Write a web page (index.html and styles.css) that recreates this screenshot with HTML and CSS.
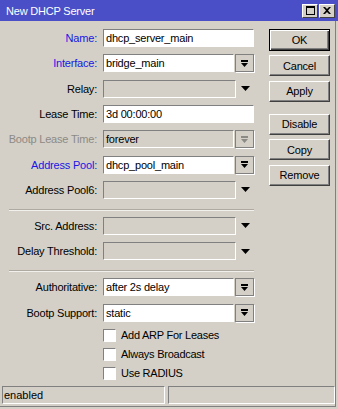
FILE: index.html
```html
<!DOCTYPE html>
<html lang="en">
<head>
    <meta charset="UTF-8">
    <meta name="viewport" content="width=device-width, initial-scale=1.0">
    <title>New DHCP Server</title>
    <link rel="stylesheet" href="styles.css">
</head>
<body>

<div class="window">
    <div class="titlebar">
        <span class="title">New DHCP Server</span>
        <div class="title-buttons">
            <span class="tbtn">
                <svg width="9" height="9" viewBox="0 0 9 9"><path d="M0 0H9V9H0Z M1 2V8H8V2Z" fill="#000" fill-rule="evenodd"/></svg>
            </span>
            <span class="tbtn">
                <svg width="8" height="7" viewBox="0 0 8 7"><path d="M0 0H2L4 2L6 0H8L5 3.5L8 7H6L4 5L2 7H0L3 3.5Z" fill="#000"/></svg>
            </span>
        </div>
    </div>

    <div class="main">
        <div class="content">
            <div class="form">
                <div class="row">
                    <label class="lbl blue">Name:</label>
                    <div class="field"><div class="box">dhcp_server_main</div></div>
                </div>
                <div class="row">
                    <label class="lbl blue">Interface:</label>
                    <div class="field">
                        <div class="box">bridge_main</div>
                        <span class="dd"><svg width="7" height="7" viewBox="0 0 7 7"><rect x="0" y="0" width="7" height="2" fill="#000"/><path d="M0 3H7L3.5 7Z" fill="#000"/></svg></span>
                    </div>
                </div>
                <div class="row">
                    <label class="lbl">Relay:</label>
                    <div class="field plain">
                        <div class="box empty"></div>
                        <span class="arrow"><svg width="9" height="5" viewBox="0 0 9 5"><path d="M0 0H9L4.5 5Z" fill="#000"/></svg></span>
                    </div>
                </div>
                <div class="row">
                    <label class="lbl">Lease Time:</label>
                    <div class="field"><div class="box">3d 00:00:00</div></div>
                </div>
                <div class="row">
                    <label class="lbl disabled">Bootp Lease Time:</label>
                    <div class="field">
                        <div class="box empty">forever</div>
                        <span class="dd"><svg width="7" height="7" viewBox="0 0 7 7"><rect x="0" y="0" width="7" height="2" fill="#8c8a85"/><path d="M0 3H7L3.5 7Z" fill="#8c8a85"/></svg></span>
                    </div>
                </div>
                <div class="row">
                    <label class="lbl blue">Address Pool:</label>
                    <div class="field">
                        <div class="box">dhcp_pool_main</div>
                        <span class="dd"><svg width="7" height="7" viewBox="0 0 7 7"><rect x="0" y="0" width="7" height="2" fill="#000"/><path d="M0 3H7L3.5 7Z" fill="#000"/></svg></span>
                    </div>
                </div>
                <div class="row">
                    <label class="lbl">Address Pool6:</label>
                    <div class="field plain">
                        <div class="box empty"></div>
                        <span class="arrow"><svg width="9" height="5" viewBox="0 0 9 5"><path d="M0 0H9L4.5 5Z" fill="#000"/></svg></span>
                    </div>
                </div>

                <div class="sep"></div>

                <div class="row">
                    <label class="lbl">Src. Address:</label>
                    <div class="field plain">
                        <div class="box empty"></div>
                        <span class="arrow"><svg width="9" height="5" viewBox="0 0 9 5"><path d="M0 0H9L4.5 5Z" fill="#000"/></svg></span>
                    </div>
                </div>
                <div class="row">
                    <label class="lbl">Delay Threshold:</label>
                    <div class="field plain">
                        <div class="box empty"></div>
                        <span class="arrow"><svg width="9" height="5" viewBox="0 0 9 5"><path d="M0 0H9L4.5 5Z" fill="#000"/></svg></span>
                    </div>
                </div>

                <div class="sep"></div>

                <div class="row">
                    <label class="lbl">Authoritative:</label>
                    <div class="field">
                        <div class="box">after 2s delay</div>
                        <span class="dd"><svg width="7" height="7" viewBox="0 0 7 7"><rect x="0" y="0" width="7" height="2" fill="#000"/><path d="M0 3H7L3.5 7Z" fill="#000"/></svg></span>
                    </div>
                </div>
                <div class="row">
                    <label class="lbl">Bootp Support:</label>
                    <div class="field">
                        <div class="box">static</div>
                        <span class="dd"><svg width="7" height="7" viewBox="0 0 7 7"><rect x="0" y="0" width="7" height="2" fill="#000"/><path d="M0 3H7L3.5 7Z" fill="#000"/></svg></span>
                    </div>
                </div>

                <div class="checks">
                    <div class="check"><span class="cb"></span>Add ARP For Leases</div>
                    <div class="check"><span class="cb"></span>Always Broadcast</div>
                    <div class="check"><span class="cb"></span>Use RADIUS</div>
                </div>
            </div>

            <div class="buttons">
                <button class="btn default">OK</button>
                <button class="btn">Cancel</button>
                <button class="btn">Apply</button>
                <button class="btn spaced">Disable</button>
                <button class="btn">Copy</button>
                <button class="btn">Remove</button>
            </div>
        </div>

        <div class="status">
            <div class="cell">enabled</div>
            <div class="cell"></div>
        </div>
    </div>
</div>

</body>
</html>
```

FILE: styles.css
```css
* {
    box-sizing: border-box;
}

body {
    margin: 0;
    font-family: 'Liberation Sans', Arial, sans-serif;
    font-size: 11px;
    color: #000;
    background-color: #d4d0c8;
}

.window {
    width: 338px;
    height: 409px;
    display: flex;
    flex-direction: column;
    background: #d4d0c8;
    padding-bottom: 2px;
}

.titlebar {
    height: 21px;
    flex-shrink: 0;
    background: #4a4fc8;
    color: white;
    display: flex;
    align-items: center;
    justify-content: space-between;
    padding: 0 3px 0 6px;
}

.title {
    letter-spacing: -0.2px;
}

.title-buttons {
    display: flex;
    gap: 1px;
}

.tbtn {
    width: 16px;
    height: 14px;
    background: #d4d0c8;
    border: 1px solid;
    border-color: #fff #404040 #404040 #fff;
    display: flex;
    align-items: center;
    justify-content: center;
}

.main {
    flex: 1;
    display: flex;
    flex-direction: column;
    margin-right: 2px;
    border-right: 1px solid #808080;
    border-bottom: 1px solid #808080;
}

.content {
    display: flex;
    padding-top: 8px;
}

.form {
    width: 254px;
    display: flex;
    flex-direction: column;
}

.row {
    display: flex;
    align-items: center;
    gap: 6px;
    height: 18px;
}

.row + .row {
    margin-top: 7.33px;
}

.lbl {
    width: 97px;
    text-align: right;
    white-space: nowrap;
    letter-spacing: -0.2px;
}

.lbl.blue {
    color: #1717e3;
}

.lbl.disabled {
    color: #8c8a85;
}

.field {
    width: 151px;
    height: 18px;
    display: flex;
    gap: 1px;
}

.field.plain {
    gap: 0;
}

.box {
    flex: 1;
    height: 18px;
    background: #fff;
    border: 1px solid;
    border-color: #808080 #fff #fff #808080;
    padding: 0 2px;
    line-height: 16px;
    white-space: nowrap;
    overflow: hidden;
    letter-spacing: -0.2px;
}

.box.empty {
    background: #d4d0c8;
}

.dd {
    width: 19px;
    height: 18px;
    border: 1px solid #808080;
    box-shadow: 1px 1px 0 #fff;
    display: flex;
    align-items: center;
    justify-content: center;
}

.arrow {
    width: 18px;
    display: flex;
    align-items: center;
    justify-content: center;
}

.sep {
    margin: 10px 0 6px 9px;
    width: 245px;
    height: 2px;
    border-top: 1px solid #aeaaa2;
    border-bottom: 1px solid #f2f0ec;
}

.checks {
    display: flex;
    flex-direction: column;
    gap: 6px;
    margin-top: 7px;
}

.check {
    display: flex;
    align-items: center;
    gap: 5px;
    height: 13px;
    padding-left: 103px;
    letter-spacing: -0.25px;
}

.cb {
    width: 13px;
    height: 13px;
    background: #fff;
    border: 1px solid;
    border-color: #808080 #fff #fff #808080;
}

.buttons {
    margin-left: 15px;
    width: 61px;
    display: flex;
    flex-direction: column;
    gap: 4.33px;
}

.btn {
    height: 21px;
    padding: 0;
    font-family: inherit;
    font-size: 11px;
    letter-spacing: -0.2px;
    color: #000;
    background: #d4d0c8;
    border: 1px solid;
    border-color: #fff #404040 #404040 #fff;
    box-shadow: inset -1px -1px 0 #808080;
}

.btn.default {
    height: 22px;
    border-color: #000;
    box-shadow: inset 1px 1px 0 #fff, inset -1px -1px 0 #404040, inset -2px -2px 0 #808080;
}

.btn.spaced {
    margin-top: 8px;
}

.status {
    margin-top: auto;
    margin-bottom: 2px;
    height: 18px;
    display: flex;
    gap: 3px;
    padding-left: 2px;
}

.cell {
    border: 1px solid;
    border-color: #808080 #fff #fff #808080;
    line-height: 16px;
    padding-left: 1px;
}

.cell:first-child {
    width: 163px;
}

.cell:last-child {
    flex: 1;
}
```
